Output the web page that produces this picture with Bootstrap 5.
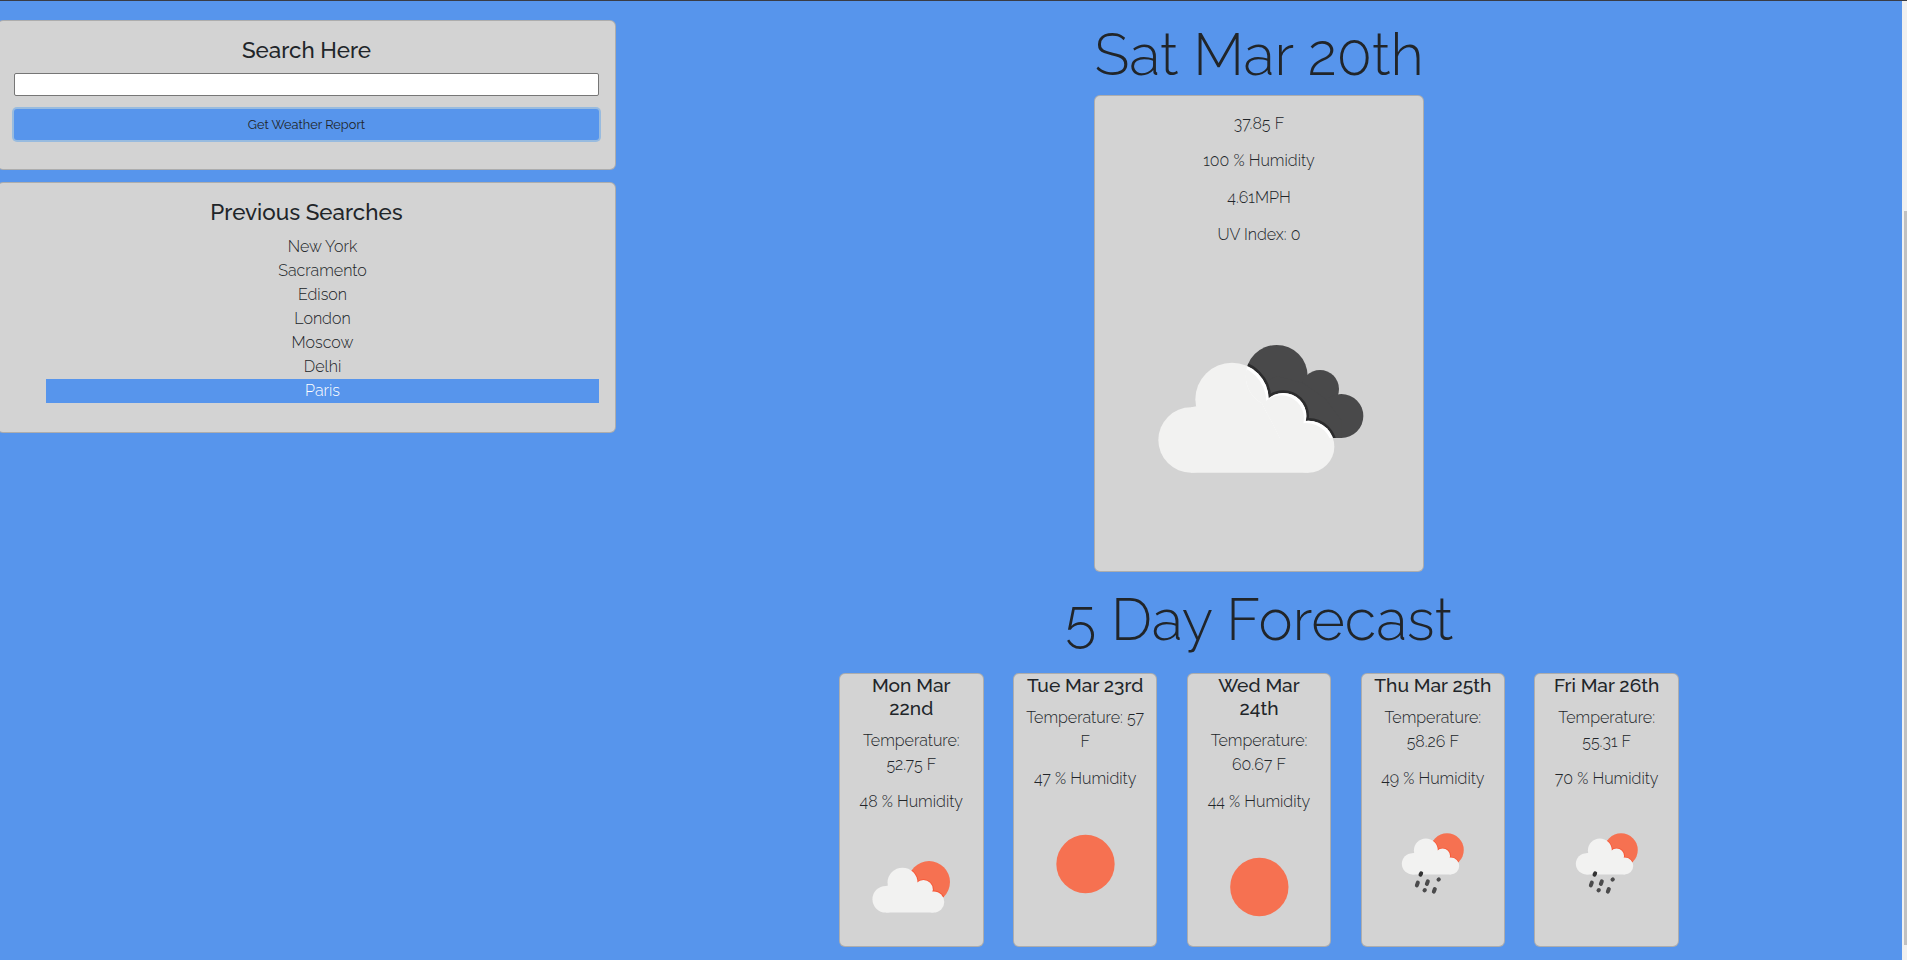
<!DOCTYPE html>
<html lang="en">
<head>
<meta charset="utf-8">
<title>Weather Dashboard</title>
<link href="https://cdn.jsdelivr.net/npm/bootstrap@5.3.0/dist/css/bootstrap.min.css" rel="stylesheet">
<style>
body{background:#5795ec;font-family:Raleway,Lato,"Open Sans",sans-serif;font-weight:300;font-size:16px;line-height:24px;color:#212529;height:960px;overflow:hidden}
.page{height:960px;border-top:1px solid #3a3c44}
.card{--bs-card-bg:#d3d3d3;--bs-card-border-color:rgba(0,0,0,.18);--bs-card-border-radius:6px}
.side{width:619px;margin-left:-3px;padding-top:19px}
.search-card{height:150px;padding:16px 16px 0;margin-bottom:12px}
.history-card{height:251px;padding:16px 16px 0}
.side-title{font-size:22.4px;line-height:26px;font-weight:500;margin:0}
.city-input{height:23px;border:1px solid #767676;border-radius:2px;margin-top:10px}
.btn-search{height:31px;margin-top:13px;background:#5795ec;border:0;border-radius:3px;font-size:12.8px;line-height:18px;padding:4px;color:#212529;box-shadow:0 0 0 2px #98bbdf}
.history{padding-left:32px;margin-top:10px}
.picked{background:#5795ec;color:#fff}
.main-col{width:870px;margin-left:208px}
.big-title{font-size:57.6px;line-height:70px;font-weight:300;margin:0;white-space:nowrap}
.title-today{margin:19px 0 5px}
.title-week{margin:13px 0 18px}
.today{width:330px;height:477px;padding-top:16px;overflow:hidden}
.today p{margin-bottom:13px}
.today-icon{margin-top:60px;margin-left:-1px}
.days{width:840px}
.day{width:144.6px;height:274px;padding:0 10px}
.day h5{font-size:19.2px;line-height:23px;font-weight:500;margin:0 -6px 9px}
.day p{margin:0 -6px 13px}
.day svg{margin:10px auto 0}
.scroll-track{width:5px;background:#f0f0f0;padding:210px 0 0 2px}
.scroll-thumb{height:734px;background:#c1c1c1}
</style>
</head>
<body>
<svg width="0" height="0" class="position-absolute">
 <defs>
  <g id="cloud"><circle cx="333" cy="360" r="98"/><circle cx="456" cy="238" r="110"/><circle cx="610" cy="288" r="69"/><circle cx="685" cy="380" r="78"/><path d="M333 458H685L700 330 600 260 400 250 333 262Z"/></g>
  <clipPath id="cloudClip"><circle cx="333" cy="360" r="98"/><circle cx="456" cy="238" r="110"/><circle cx="610" cy="288" r="69"/><circle cx="685" cy="380" r="78"/><path d="M333 458H685L700 330 600 260 400 250 333 262Z"/></clipPath>
  <g id="dark"><circle cx="590" cy="168" r="93"/><circle cx="720" cy="207" r="57"/><circle cx="784" cy="288" r="66"/><path d="M520 200L590 168 670 190 735 235 784 300V354H600Z"/></g>
  <clipPath id="darkClip"><circle cx="590" cy="168" r="93"/><circle cx="720" cy="207" r="57"/><circle cx="784" cy="288" r="66"/><path d="M520 200L590 168 670 190 735 235 784 300V354H600Z"/></clipPath>
  <clipPath id="sunClip"><circle cx="651" cy="233" r="154"/></clipPath>
  <g id="litCloud">
   <use href="#cloud" fill="#fff"/>
   <g clip-path="url(#cloudClip)"><use href="#cloud" fill="#f2f2f1" transform="translate(-7 7)"/></g>
  </g>
  <g id="sunCloud">
   <circle cx="651" cy="233" r="154" fill="#f67151"/>
   <g clip-path="url(#sunClip)"><use href="#cloud" fill="#f75534" stroke="#f75534" stroke-width="14"/></g>
   <use href="#cloud" fill="#f2f2f1"/>
  </g>
  <g id="rainIcon">
   <g transform="translate(36.4 32) scale(.326)"><use href="#sunCloud"/></g>
   <g stroke="#4b4b4c" stroke-width="12" stroke-linecap="round"><path d="M171 178l-2 4" stroke="#333"/><path d="M161 206l-3 8M191 202l-3 8M224 196l-1 1M182 228l-1 1M212 225l-3 8"/></g>
  </g>
 </defs>
</svg>
<div class="page d-flex">
 <aside class="side flex-shrink-0 text-center">
  <div class="card search-card">
   <h4 class="side-title">Search Here</h4>
   <input class="city-input w-100" type="text" aria-label="City">
   <button class="btn btn-search w-100">Get Weather Report</button>
  </div>
  <div class="card history-card">
   <h4 class="side-title">Previous Searches</h4>
   <ul class="history list-unstyled">
    <li>New York</li><li>Sacramento</li><li>Edison</li><li>London</li><li>Moscow</li><li>Delhi</li><li class="picked">Paris</li>
   </ul>
  </div>
 </aside>
 <main class="main-col text-center flex-shrink-0 d-flex flex-column align-items-center">
  <h1 class="big-title title-today">Sat Mar 20th</h1>
  <div class="card today">
   <p>37.85 F</p><p>100 % Humidity</p><p>4.61MPH</p><p>UV Index: 0</p>
   <svg class="today-icon" width="330" height="250" viewBox="42 0 990 750">
    <use href="#dark" fill="#49494a"/>
    <g clip-path="url(#darkClip)"><use href="#cloud" fill="#2c2c2d" stroke="#2c2c2d" stroke-width="16"/></g>
    <use href="#cloud" fill="#f2f2f1"/>
    <g clip-path="url(#darkClip)"><use href="#litCloud"/></g>
   </svg>
  </div>
  <h1 class="big-title title-week">5 Day Forecast</h1>
  <div class="days d-flex justify-content-between">
   <div class="card day"><h5>Mon Mar<br>22nd</h5><p>Temperature:<br>52.75 F</p><p>48 % Humidity</p>
    <svg width="100" height="100" viewBox="0 0 300 300"><g transform="translate(-61.5 40) scale(.408)"><use href="#sunCloud"/></g></svg></div>
   <div class="card day"><h5>Tue Mar 23rd</h5><p>Temperature: 57<br>F</p><p>47 % Humidity</p>
    <svg width="100" height="100" viewBox="0 0 300 300"><circle cx="151.5" cy="150" r="87.5" fill="#f67151"/></svg></div>
   <div class="card day"><h5>Wed Mar<br>24th</h5><p>Temperature:<br>60.67 F</p><p>44 % Humidity</p>
    <svg width="100" height="100" viewBox="0 0 300 300"><circle cx="151" cy="150" r="87.5" fill="#f67151"/></svg></div>
   <div class="card day"><h5>Thu Mar 25th</h5><p>Temperature:<br>58.26 F</p><p>49 % Humidity</p>
    <svg width="100" height="100" viewBox="0 0 300 300"><use href="#rainIcon" x="-56.5"/></svg></div>
   <div class="card day"><h5>Fri Mar 26th</h5><p>Temperature:<br>55.31 F</p><p>70 % Humidity</p>
    <svg width="100" height="100" viewBox="0 0 300 300"><use href="#rainIcon" x="-56.5"/></svg></div>
  </div>
 </main>
 <div class="scroll-track ms-auto"><div class="scroll-thumb"></div></div>
</div>
<script src="https://cdn.jsdelivr.net/npm/bootstrap@5.3.0/dist/js/bootstrap.bundle.min.js"></script>
</body>
</html>
